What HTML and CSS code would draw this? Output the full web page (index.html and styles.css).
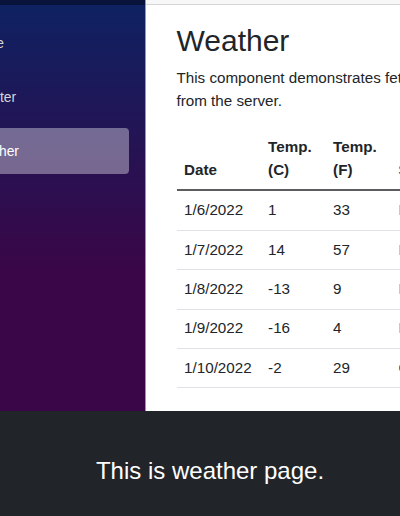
FILE: index.html
```html
<!DOCTYPE html>
<html lang="en">
<head>
<meta charset="utf-8">
<title>Weather</title>
<link rel="stylesheet" href="styles.css">
</head>
<body>
<div class="page">
  <div class="sidebar">
    <div class="sidebar-top"></div>
    <ul class="nav">
      <li class="nav-item">
        <a class="nav-link" href="#"><svg class="nav-icon" viewBox="0 0 16 16"><path d="M8 2 2 7.5V14h4.5v-4h3v4H14V7.5z" fill="none" stroke="currentColor" stroke-width="1.2"/></svg>Home</a>
      </li>
      <li class="nav-item">
        <a class="nav-link" href="#"><svg class="nav-icon" viewBox="0 0 16 16"><rect x="1.5" y="1.5" width="13" height="13" rx="2" fill="none" stroke="currentColor" stroke-width="1.2"/><path d="M8 4.5v7M4.5 8h7" stroke="currentColor" stroke-width="1.2"/></svg>Counter</a>
      </li>
      <li class="nav-item">
        <a class="nav-link active" href="#"><svg class="nav-icon" viewBox="0 0 16 16"><path d="M5 4h9M7 8h7M9 12h5" stroke="currentColor" stroke-width="1.2"/></svg>Weather</a>
      </li>
    </ul>
  </div>
  <main class="main">
    <div class="main-top"></div>
    <article class="content">
      <h1 class="title">Weather</h1>
      <p class="lead">This component demonstrates fetching data from the server.</p>
      <table class="table">
        <colgroup>
          <col class="col-date">
          <col class="col-c">
          <col class="col-f">
          <col>
        </colgroup>
        <thead>
          <tr><th>Date</th><th>Temp. (C)</th><th>Temp. (F)</th><th>Summary</th></tr>
        </thead>
        <tbody>
          <tr><td>1/6/2022</td><td>1</td><td>33</td><td>Freezing</td></tr>
          <tr><td>1/7/2022</td><td>14</td><td>57</td><td>Bracing</td></tr>
          <tr><td>1/8/2022</td><td>-13</td><td>9</td><td>Freezing</td></tr>
          <tr><td>1/9/2022</td><td>-16</td><td>4</td><td>Balmy</td></tr>
          <tr><td>1/10/2022</td><td>-2</td><td>29</td><td>Chilly</td></tr>
        </tbody>
      </table>
    </article>
  </main>
</div>
<footer class="footer">This is weather page.</footer>
</body>
</html>
```

FILE: styles.css
```css
html, body {
  margin: 0;
  padding: 0;
  overflow: hidden;
}

body {
  font-family: "Liberation Sans", Arial, sans-serif;
  font-size: 15.2px;
  line-height: 1.5;
  color: #212529;
  background: #212529;
}

.page {
  display: flex;
  width: 400px;
  overflow: hidden;
  background: #fff;
}

.sidebar {
  width: 145px;
  flex: none;
  overflow: hidden;
  border-right: 1px solid rgba(255, 255, 255, 0.55);
  background-image: linear-gradient(180deg, rgb(5, 39, 103) -12.4%, #3a0647 66.3%);
}

.sidebar-top {
  height: 5px;
  background: rgba(0, 0, 0, 0.4);
}

.nav {
  list-style: none;
  width: 250px;
  margin: 0 0 0 -105px;
  padding: 15.5px 0 0;
}

.nav-item {
  padding: 0 16px 7.8px;
}

.nav-link {
  display: flex;
  align-items: center;
  box-sizing: border-box;
  height: 46px;
  padding: 2px 16px 0;
  border-radius: 4px;
  color: #d7d7d7;
  font-size: 13.8px;
  text-decoration: none;
}

.nav-link.active {
  background: rgba(255, 255, 255, 0.37);
  color: #fff;
}

.nav-icon {
  width: 20px;
  height: 20px;
  margin-right: 20px;
  flex: none;
}

.main {
  flex: 1;
  min-width: 0;
  overflow: hidden;
  background: #fff;
}

.main-top {
  height: 4px;
  background: #f7f7f7;
  border-bottom: 1px solid #d6d5d5;
}

.content {
  width: 310px;
  padding: 18px 0 23px 30.5px;
}

.title {
  margin: 0 0 8px;
  font-size: 30px;
  line-height: 1.2;
  font-weight: 400;
}

.lead {
  margin: 0 0 15.6px;
}

.table {
  width: 310px;
  table-layout: fixed;
  border-collapse: collapse;
}

.col-date { width: 84px; }
.col-c { width: 65px; }
.col-f { width: 65.5px; }

.table th,
.table td {
  padding: 7.8px 7.6px;
  text-align: left;
  border-bottom: 1px solid #dee2e6;
}

.table thead th {
  vertical-align: bottom;
  font-weight: 700;
  border-bottom: 2px solid #5a5c5e;
}

.table td {
  white-space: nowrap;
}

.footer {
  display: flex;
  justify-content: center;
  padding: 42px 0 26px 20px;
  background: #212529;
  color: #fff;
  font-size: 24px;
  line-height: 1.5;
}
```
